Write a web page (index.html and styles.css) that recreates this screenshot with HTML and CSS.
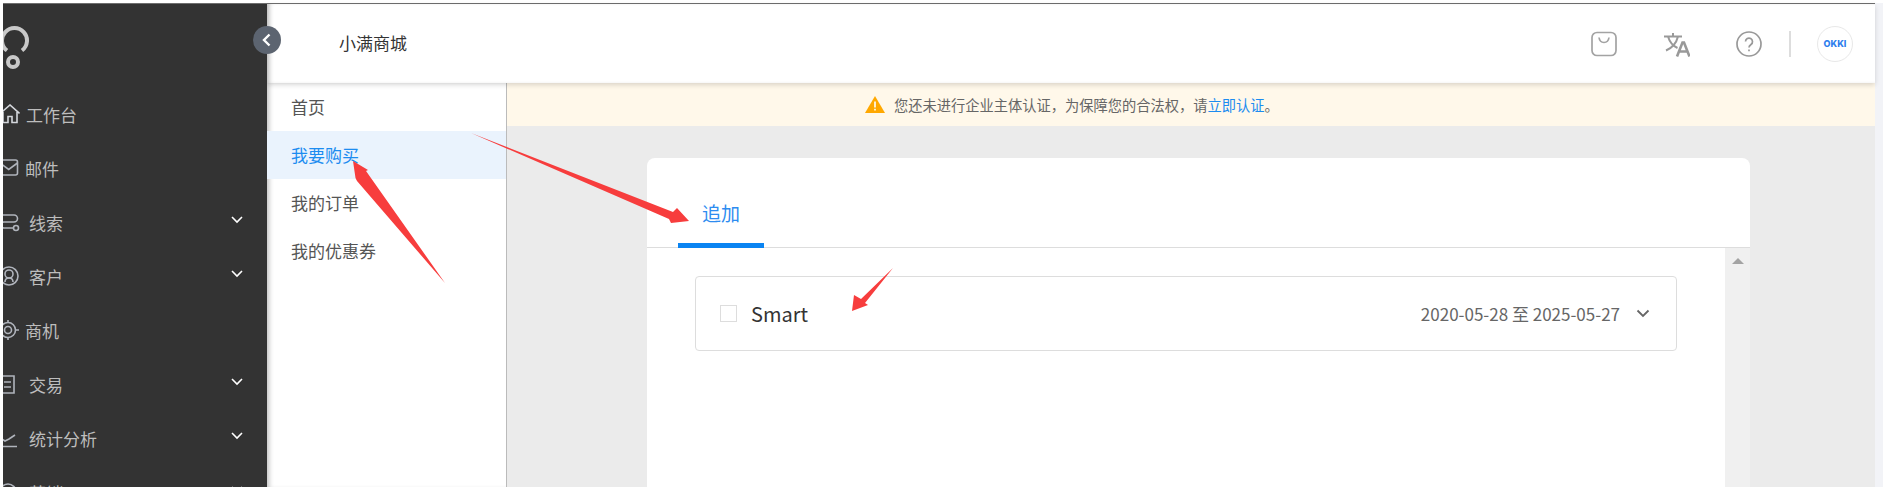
FILE: index.html
```html
<!DOCTYPE html>
<html lang="zh-CN">
<head>
    <meta charset="UTF-8">
    <title>小满商城</title>
    <link rel="stylesheet" href="styles.css">
</head>
<body>
    <div class="window">
        <aside class="sidebar">
            <div class="logo">
                <svg width="32" height="46" viewBox="0 0 32 46" fill="none" stroke="#c9c9c9" stroke-width="4">
                    <path d="M8 25.500A12.500 12.500 0 1 1 23 25.500"/>
                    <circle cx="14" cy="37" r="5"/>
                </svg>
            </div>
            <nav class="menu">
                <div class="menu-item">
                    <svg class="menu-icon" viewBox="0 0 20 20" fill="none" stroke="#d4d7dc" stroke-width="1.600"><path d="M0 9.500 10 1l9.500 8.500M3 8v10.500h5v-6h4v6h5V8"/></svg>
                    <span class="menu-label first">工作台</span>
                </div>
                <div class="menu-item">
                    <svg class="menu-icon" viewBox="0 0 20 20" fill="none" stroke="#b0b4bc" stroke-width="1.600"><rect x="0" y="2" width="17.500" height="15" rx="2"/><path d="M0 5l8.700 6.500L17.500 5"/></svg>
                    <span class="menu-label">邮件</span>
                </div>
                <div class="menu-item">
                    <svg class="menu-icon" viewBox="0 0 20 20" fill="none" stroke="#b0b4bc" stroke-width="1.600"><path d="M2 3h12a3.500 3.500 0 0 1 0 7H4a3 3 0 0 0 0 6h10"/><circle cx="16" cy="16" r="2.500"/></svg>
                    <span class="menu-label wide">线索</span>
                    <svg class="menu-arrow" viewBox="0 0 12 8" fill="none" stroke="#fff" stroke-width="1.600"><path d="M1 1l5 5 5-5"/></svg>
                </div>
                <div class="menu-item">
                    <svg class="menu-icon" viewBox="0 0 20 20" fill="none" stroke="#b0b4bc" stroke-width="1.600"><circle cx="9" cy="10" r="9"/><circle cx="9" cy="8" r="4"/><path d="M5 16c0-3 2-4 4-4s4 1 4 4"/></svg>
                    <span class="menu-label wide">客户</span>
                    <svg class="menu-arrow" viewBox="0 0 12 8" fill="none" stroke="#fff" stroke-width="1.600"><path d="M1 1l5 5 5-5"/></svg>
                </div>
                <div class="menu-item">
                    <svg class="menu-icon" viewBox="0 0 20 20" fill="none" stroke="#b0b4bc" stroke-width="1.600"><circle cx="8" cy="10" r="7.500"/><circle cx="8" cy="10" r="3.500"/><path d="M8 0v2.500M8 17.500V20M16 10h3"/></svg>
                    <span class="menu-label">商机</span>
                </div>
                <div class="menu-item">
                    <svg class="menu-icon" viewBox="0 0 20 20" fill="none" stroke="#b0b4bc" stroke-width="1.600"><path d="M0 2h14v17H0M4 8h7M4 13h7"/></svg>
                    <span class="menu-label wide">交易</span>
                    <svg class="menu-arrow" viewBox="0 0 12 8" fill="none" stroke="#fff" stroke-width="1.600"><path d="M1 1l5 5 5-5"/></svg>
                </div>
                <div class="menu-item">
                    <svg class="menu-icon" viewBox="0 0 20 20" fill="none" stroke="#b0b4bc" stroke-width="1.600"><path d="M0 10l5 3 4-2 6-4M0 18.500h17"/></svg>
                    <span class="menu-label wide">统计分析</span>
                    <svg class="menu-arrow" viewBox="0 0 12 8" fill="none" stroke="#fff" stroke-width="1.600"><path d="M1 1l5 5 5-5"/></svg>
                </div>
                <div class="menu-item">
                    <svg class="menu-icon" viewBox="0 0 20 20" fill="none" stroke="#b0b4bc" stroke-width="1.600"><circle cx="8" cy="10" r="8"/></svg>
                    <span class="menu-label wide">营销</span>
                    <svg class="menu-arrow" viewBox="0 0 12 8" fill="none" stroke="#fff" stroke-width="1.600"><path d="M1 1l5 5 5-5"/></svg>
                </div>
            </nav>
        </aside>

        <div class="main">
            <header class="topbar">
                <div class="shop-name">小满商城</div>
                <div class="top-actions">
                    <svg class="top-icon" viewBox="0 0 26 26" fill="none" stroke="#a3a3a3" stroke-width="1.700"><rect x="1" y="1.500" width="24" height="23" rx="5"/><path d="M8 6.500c.5 3.500 2.500 5 5 5s4.500-1.500 5-5"/></svg>
                    <svg class="top-icon lang" viewBox="0 0 26 26" fill="none" stroke="#999" stroke-width="2"><path d="M0 5.500h18M9 2v3.500M14 5.500c-1.500 6-6 11.500-12 14M4 5.500c1.500 5 5 9.500 9.500 11.500"/><path d="M13 25.500l5.500-14h1.500l5.500 14M15 20.500h8.500" stroke-width="2.600"/></svg>
                    <svg class="top-icon help" viewBox="0 0 26 26" fill="none" stroke="#999" stroke-width="1.700"><circle cx="13" cy="13" r="12"/><path d="M9.500 10.500a3.500 3.500 0 1 1 5.500 3c-1.300.9-2 1.400-2 3"/><path d="M13 18.500v1.800"/></svg>
                    <div class="top-divider"></div>
                    <div class="avatar">OKKI</div>
                </div>
            </header>

            <div class="body">
                <nav class="subnav">
                    <div class="subnav-item">首页</div>
                    <div class="subnav-item active">我要购买</div>
                    <div class="subnav-item">我的订单</div>
                    <div class="subnav-item">我的优惠券</div>
                </nav>

                <div class="content">
                    <div class="notice">
                        <svg class="notice-icon" viewBox="0 0 20 17"><path d="M10 0 20 17H0z" fill="#ffa800"/><path d="M10 5.500v6M10 12.800v1.800" stroke="#fff" stroke-width="1.600"/></svg>
                        <span>您还未进行企业主体认证，为保障您的合法权，请<a class="notice-link">立即认证</a>。</span>
                    </div>
                    <div class="workspace">
                        <section class="card">
                            <div class="tabs">
                                <div class="tab">追加</div>
                            </div>
                            <div class="card-body">
                                <div class="list">
                                    <div class="package">
                                        <span class="checkbox"></span>
                                        <span class="package-name">Smart</span>
                                        <span class="package-date">2020-05-28 至 2025-05-27</span>
                                        <svg class="package-arrow" viewBox="0 0 14 9" fill="none" stroke="#666" stroke-width="1.800"><path d="M1.500 1.500 7 7l5.500-5.500"/></svg>
                                    </div>
                                </div>
                                <div class="scrollbar"><span class="scroll-up"></span></div>
                            </div>
                        </section>
                    </div>
                </div>
            </div>
        </div>
    </div>

    <div class="collapse-btn">
        <svg width="10" height="14" viewBox="0 0 10 14" fill="none" stroke="#fff" stroke-width="2.400"><path d="M7.500 1.500 2 7l5.500 5.500"/></svg>
    </div>

    <svg class="marks" width="1883" height="487" viewBox="0 0 1883 487" fill="#f73d3d">
        <polygon points="471,133 673,212 677,208 689,221 671,223 669,219"/>
        <polygon points="353,161 368,170 366,171 445,283 357,181 355.500,178"/>
        <polygon points="852,311 854,295 861,299 893,268 865,303 868,305"/>
    </svg>
</body>
</html>
```

FILE: styles.css
```css
* {
    box-sizing: border-box;
}

html, body {
    height: 100%;
}

body {
    margin: 0;
    padding: 3px 8px 0 3px;
    background-color: #fff;
    font-family: "Noto Sans CJK SC", "Noto Sans", sans-serif;
    overflow: hidden;
    position: relative;
}

body::after {
    content: "";
    position: absolute;
    top: 3px;
    right: 0;
    bottom: 0;
    width: 8px;
    background-color: #f2f3f7;
}

.window {
    display: flex;
    height: 484px;
    border-top: 1px solid #6e6e6e;
}

/* left menu */
.sidebar {
    width: 264px;
    flex-shrink: 0;
    background-color: #333;
    overflow: hidden;
    position: relative;
    z-index: 2;
}

.logo {
    height: 83px;
    padding-top: 21px;
}

.logo svg {
    display: block;
    margin-left: -4px;
}

.menu-item {
    display: flex;
    align-items: center;
    height: 54px;
    padding-right: 24px;
    color: #bdbdbd;
    font-size: 17px;
}

.menu-icon {
    width: 20px;
    height: 20px;
    margin-left: -3px;
    flex-shrink: 0;
}

.menu-label {
    margin-left: 5px;
}

.menu-label.first {
    margin-left: 6px;
}

.menu-label.wide {
    margin-left: 9px;
}

.menu-arrow {
    width: 12px;
    height: 8px;
    margin-left: auto;
    margin-bottom: 5px;
}

.collapse-btn {
    position: absolute;
    left: 253px;
    top: 26px;
    width: 28px;
    height: 28px;
    border-radius: 50%;
    background-color: #5c6470;
    display: flex;
    align-items: center;
    justify-content: center;
    z-index: 5;
}

/* right side */
.main {
    flex: 1;
    min-width: 0;
    display: flex;
    flex-direction: column;
}

.topbar {
    height: 79px;
    flex-shrink: 0;
    display: flex;
    align-items: center;
    justify-content: space-between;
    padding: 0 22px 0 72px;
    background-color: #fff;
    box-shadow: inset 5px 0 5px -3px rgba(0,0,0,0.3), 0 2px 5px rgba(0,0,0,0.15);
    position: relative;
    z-index: 1;
}

.shop-name {
    font-size: 17px;
    color: #333;
    margin-bottom: 2px;
}

.top-actions {
    display: flex;
    align-items: center;
}

.top-icon {
    width: 26px;
    height: 26px;
    flex-shrink: 0;
}

.top-icon.lang {
    margin-left: 47px;
}

.top-icon.help {
    margin-left: 46px;
}

.top-divider {
    width: 2px;
    height: 26px;
    margin: 0 26px 0 27px;
    background-color: #ddd;
}

.avatar {
    width: 36px;
    height: 36px;
    border: 1px solid #e8e8e8;
    border-radius: 50%;
    display: flex;
    align-items: center;
    justify-content: center;
    color: #2f80ed;
    font-family: "Inter", sans-serif;
    font-size: 9px;
    font-weight: 800;
}

.body {
    flex: 1;
    min-height: 0;
    display: flex;
}

.subnav {
    width: 240px;
    flex-shrink: 0;
    background-color: #fff;
    border-right: 1px solid #bbb;
    box-shadow: inset 5px 0 5px -3px rgba(0,0,0,0.25);
}

.subnav-item {
    height: 48px;
    line-height: 48px;
    padding-left: 24px;
    font-size: 17px;
    color: #555;
}

.subnav-item.active {
    background-color: #eaf3fd;
    color: #1c8cf0;
}

.content {
    flex: 1;
    min-width: 0;
    display: flex;
    flex-direction: column;
    background-color: #ebebeb;
}

.notice {
    height: 43px;
    flex-shrink: 0;
    display: flex;
    align-items: center;
    gap: 9px;
    padding-left: 358px;
    background-color: #fff8ea;
    color: #666;
    font-size: 14.25px;
}

.notice-icon {
    width: 20px;
    height: 17px;
}

.notice-link {
    color: #1c8cf0;
}

.workspace {
    flex: 1;
    min-height: 0;
    padding: 32px 125px 0 140px;
}

.card {
    height: 100%;
    display: flex;
    flex-direction: column;
    background-color: #fff;
    border-radius: 8px 8px 0 0;
}

.tabs {
    height: 90px;
    flex-shrink: 0;
    display: flex;
    align-items: flex-end;
    padding-left: 31px;
    border-bottom: 1px solid #ddd;
}

.tab {
    width: 86px;
    height: 89px;
    padding-top: 39px;
    text-align: center;
    border-bottom: 5px solid #0a84f2;
    margin-bottom: -1px;
    font-size: 19px;
    line-height: 30px;
    color: #2d8cf0;
}

.card-body {
    flex: 1;
    min-height: 0;
    display: flex;
}

.list {
    flex: 1;
    padding: 28px 48px 0;
}

.package {
    height: 75px;
    display: flex;
    align-items: center;
    padding: 0 26px 0 24px;
    border: 1px solid #ddd;
    border-radius: 4px;
}

.checkbox {
    width: 17px;
    height: 17px;
    border: 1px solid #ddd;
}

.package-name {
    margin-left: 14px;
    font-size: 20px;
    color: #333;
}

.package-date {
    margin-left: auto;
    font-size: 17px;
    color: #666;
}

.package-arrow {
    width: 14px;
    height: 9px;
    margin-left: 16px;
}

.scrollbar {
    width: 25px;
    flex-shrink: 0;
    padding-top: 10px;
    display: flex;
    justify-content: center;
    background-color: #f0f0f0;
}

.scroll-up {
    width: 0;
    height: 0;
    border-left: 6px solid transparent;
    border-right: 6px solid transparent;
    border-bottom: 6px solid #a3a3a3;
}

/* red arrows drawn over the screenshot */
.marks {
    position: absolute;
    left: 0;
    top: 0;
    z-index: 6;
    pointer-events: none;
}
```
